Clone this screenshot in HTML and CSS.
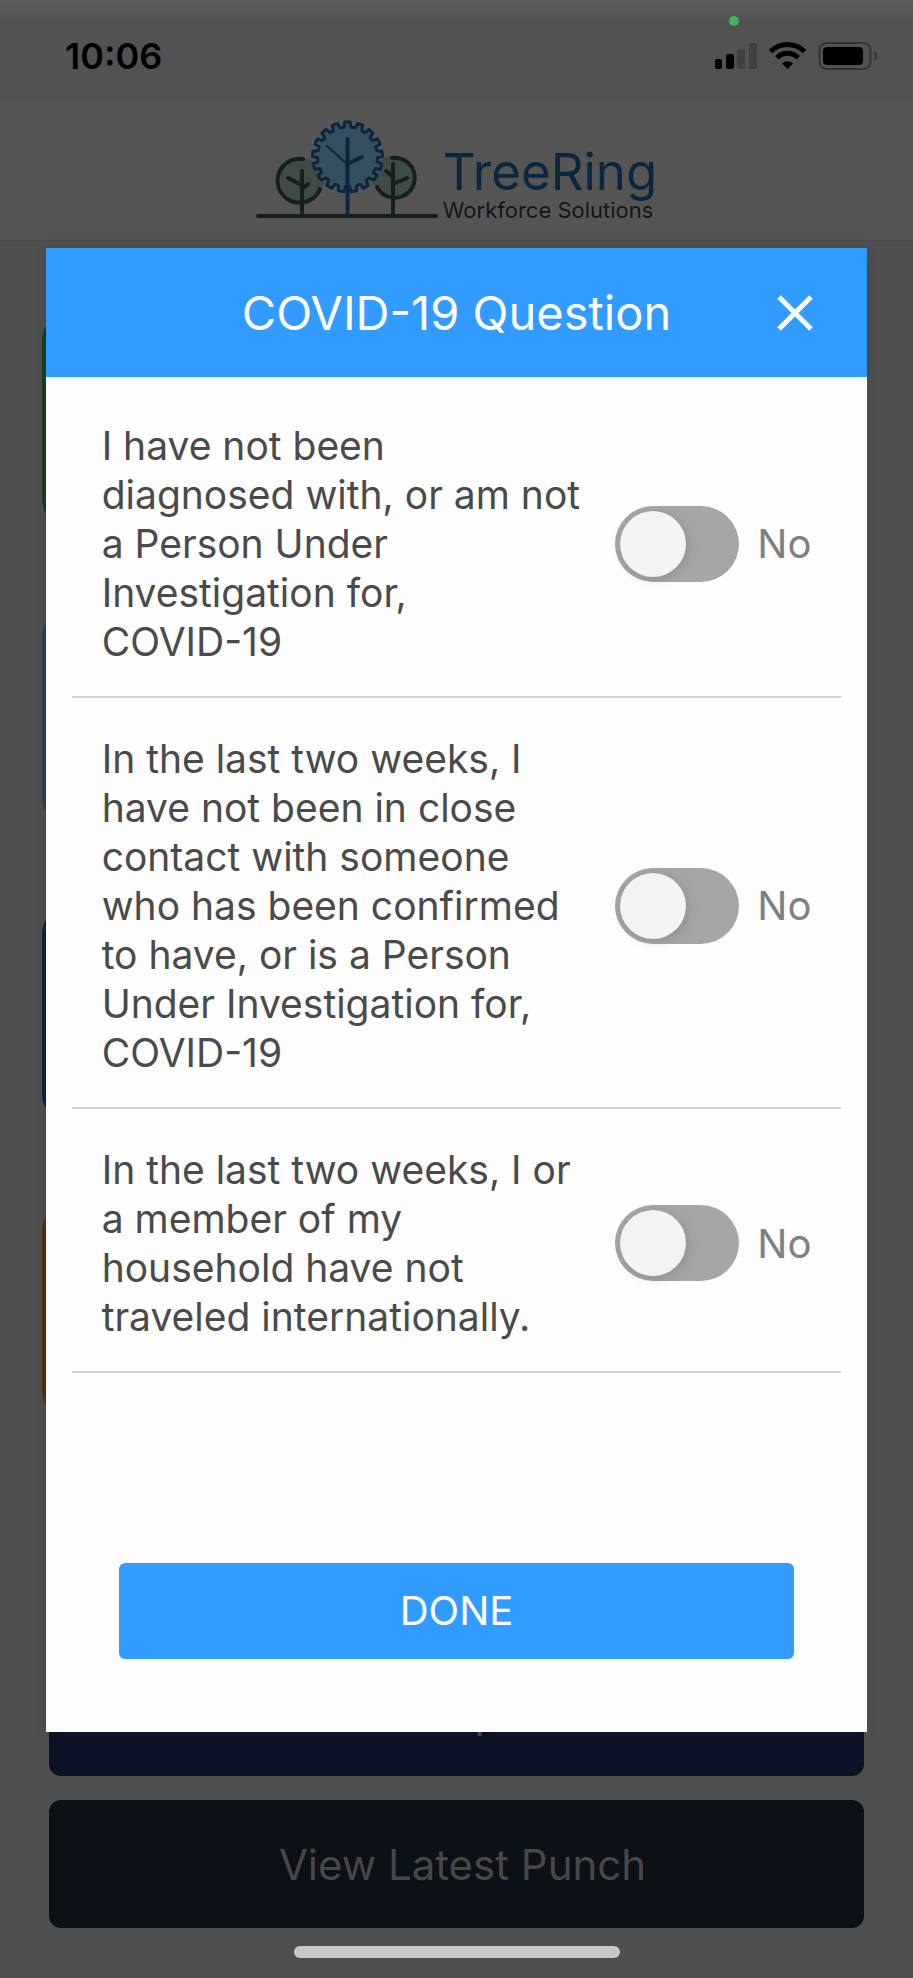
FILE: index.html
```html
<!DOCTYPE html>
<html lang="en">
<head>
  <meta charset="UTF-8">
  <meta name="viewport" content="width=device-width, initial-scale=1.0">
  <title>TreeRing Workforce Solutions</title>
  <link rel="stylesheet" href="styles.css">
</head>
<body>

<!-- Home screen, dimmed behind the dialog -->
<div class="home">
  <div class="status-bar">
    <span class="time">10:06</span>
    <span class="recording-dot"></span>
    <svg class="status-icons" width="164" height="30" viewBox="0 0 164 30">
      <rect x="0" y="18" width="7" height="10" rx="2"/>
      <rect x="11" y="13" width="8" height="15" rx="2"/>
      <rect x="22" y="8" width="8" height="20" rx="2" fill="#404040"/>
      <rect x="34" y="2" width="8" height="26" rx="2" fill="#404040"/>
      <g fill="none" stroke="#000" stroke-width="5">
        <path d="M55.500 10.500 A24 24 0 0 1 89.500 10.500"/>
        <path d="M61.800 16.800 A15 15 0 0 1 83.200 16.800"/>
      </g>
      <path d="M72.500 28 L67 22.500 A8 8 0 0 1 78 22.500 Z"/>
      <rect x="104.500" y="2" width="51" height="26" rx="7" fill="none" stroke="#343434" stroke-width="2"/>
      <rect x="108" y="6" width="40" height="18" rx="4"/>
      <path d="M159.500 10 A6 6 0 0 1 159.500 20 Z" fill="#343434"/>
    </svg>
  </div>

  <header class="brand">
    <svg class="logo" width="184" height="100" viewBox="0 0 184 100">
      <g stroke-linecap="round" stroke-linejoin="round" fill="none">
        <circle cx="46" cy="60" r="22" fill="#414b46"/>
        <circle cx="137" cy="57" r="21" fill="#414b46"/>
        <g stroke="#141f1f" stroke-width="4">
          <path d="M47 39 A22 22 0 1 0 64 69"/>
          <path d="M136 38 A20 20 0 1 1 121 67"/>
          <path d="M46 51 V94 M32 58 L46 65 M46 69 L52 64"/>
          <path d="M137 44 V94 M130 51 L137 57 M137 64 L151 58"/>
          <path d="M2 96 H180"/>
        </g>
        <path id="gear" fill="#374f5c" stroke="#0b2740" stroke-width="3"/>
        <path d="M91.500 19 V94" stroke="#0b2740" stroke-width="4"/>
        <path d="M71 26 L91 44" stroke="#0b2740" stroke-width="2"/>
        <path d="M91 44 L106 37" stroke="#0b2740" stroke-width="4"/>
      </g>
    </svg>
    <div class="brand-text">
      <span class="brand-name">TreeRing</span>
      <span class="brand-tagline">Workforce Solutions</span>
    </div>
  </header>

  <main class="menu">
    <div class="tiles">
      <div class="tile green"></div>
      <div class="tile blue"></div>
      <div class="tile navy"></div>
      <div class="tile orange"></div>
    </div>
    <div class="menu-buttons">
      <button type="button" class="menu-button reports">See Reports</button>
      <button type="button" class="menu-button latest">View Latest Punch</button>
    </div>
    <div class="home-indicator"></div>
  </main>
</div>

<!-- COVID-19 dialog -->
<div class="overlay">
  <form class="modal" role="dialog" aria-labelledby="modal-title">
    <div class="modal-header">
      <h1 id="modal-title">COVID-19 Question</h1>
      <button type="button" class="close" aria-label="Close">
        <svg width="36" height="36" viewBox="0 0 36 36"><path d="M2 2 L34 34 M34 2 L2 34"/></svg>
      </button>
    </div>

    <div class="questions">
      <div class="question">
        <label for="q1">I have not been<br> diagnosed with, or am not a Person Under<br> Investigation for, <span class="nowrap">COVID-19</span></label>
        <input type="checkbox" class="switch" id="q1">
        <span class="answer">No</span>
      </div>
      <div class="question">
        <label for="q2">In the last two weeks, I have not been in close contact with someone who has been confirmed to have, or is a Person Under Investigation for, <span class="nowrap">COVID-19</span></label>
        <input type="checkbox" class="switch" id="q2">
        <span class="answer">No</span>
      </div>
      <div class="question">
        <label for="q3">In the last two weeks, I or a member of my household have not traveled internationally.</label>
        <input type="checkbox" class="switch" id="q3">
        <span class="answer">No</span>
      </div>
    </div>

    <button type="button" class="done">DONE</button>
  </form>
</div>

<script>
  // Gear outline of the middle tree, left open at the trunk
  const teeth = 17;
  const cx = 91.5, cy = 37;
  const step = 2 * Math.PI / teeth;
  const points = [];

  function addPoint(radius, angle) {
    points.push((cx + Math.sin(angle) * radius).toFixed(1) + ' ' + (cy - Math.cos(angle) * radius).toFixed(1));
  }

  for (let i = -8; i <= 8; i++) {
    const a = i * step;
    addPoint(30, a - step * 0.32);
    addPoint(35, a - step * 0.22);
    addPoint(35, a + step * 0.22);
    addPoint(30, a + step * 0.32);
  }
  document.getElementById('gear').setAttribute('d', 'M' + points.join(' L'));

  // Yes / No text beside each switch
  document.querySelectorAll('.switch').forEach(function (box) {
    box.addEventListener('change', function () {
      box.nextElementSibling.textContent = box.checked ? 'Yes' : 'No';
    });
  });
</script>

</body>
</html>
```
FILE: styles.css
```css
* {
  box-sizing: border-box;
}

body {
  margin: 0;
  font-family: Inter, "Liberation Sans", sans-serif;
  background: #4f4f4f;
}

button {
  font-family: inherit;
  border: none;
  cursor: pointer;
}

/* Home screen */
.home {
  display: flex;
  flex-direction: column;
  min-height: 100vh;
}

.status-bar {
  position: relative;
  display: flex;
  align-items: center;
  justify-content: space-between;
  height: 97px;
  padding: 14px 34px 0 65px;
  background: linear-gradient(#5b5b5b, #525252 24px);
}

.time {
  font-size: 36px;
  font-weight: 600;
  color: #000;
}

.recording-dot {
  position: absolute;
  top: 16px;
  right: 174px;
  width: 10px;
  height: 10px;
  border-radius: 50%;
  background: #3bb45c;
}

.brand {
  display: flex;
  align-items: flex-end;
  justify-content: center;
  gap: 3px;
  height: 144px;
  padding-bottom: 20px;
  background: #555;
  border-bottom: 1px solid #4b4b4b;
}

.brand-text {
  display: flex;
  flex-direction: column;
}

.brand-name {
  font-size: 51px;
  line-height: 56px;
  color: #0b2740;
}

.brand-tagline {
  font-size: 22px;
  line-height: 20px;
  color: #151515;
}

.menu {
  display: flex;
  flex-direction: column;
  flex: 1;
  padding: 71px 42px 20px;
}

.tiles {
  display: flex;
  flex-direction: column;
  gap: 81px;
}

.tile {
  width: 50%;
  height: 216px;
  border-radius: 28px;
}

.green { background: #17401f; }
.blue { background: #24405a; }
.navy { background: #0e2145; }
.orange { background: #542f0c; }

.menu-buttons {
  display: flex;
  flex-direction: column;
  gap: 24px;
  margin-top: auto;
  padding: 0 7px;
}

.menu-button {
  height: 128px;
  border-radius: 12px;
  background: #0c1017;
  color: #484848;
  font-size: 42px;
}

.reports {
  background: #0d1326;
}

.latest {
  padding-left: 18px;
}

.home-indicator {
  align-self: center;
  width: 326px;
  height: 12px;
  margin-top: 18px;
  border-radius: 6px;
  background: #c8c8c8;
}

/* Dialog */
.overlay {
  position: absolute;
  top: 248px;
  left: 0;
  right: 0;
  display: flex;
  justify-content: center;
}

.modal {
  display: flex;
  flex-direction: column;
  width: 90%;
  min-height: 75vh;
  padding-bottom: 73px;
  background: #fdfdfd;
  box-shadow: 0 0 12px rgba(0, 0, 0, 0.1);
}

.modal-header {
  display: grid;
  grid-template-columns: 72px 1fr 72px;
  align-items: center;
  height: 129px;
  padding: 0 36px;
  background: #319bff;
  color: #fff;
}

.modal-header h1 {
  grid-column: 2;
  margin: 0;
  font-size: 47px;
  font-weight: 400;
  text-align: center;
}

.close {
  display: flex;
  justify-content: center;
  padding: 0;
  background: none;
}

.close path {
  stroke: #fff;
  stroke-width: 5;
}

.questions {
  padding: 8px 26px 0;
}

.question {
  display: flex;
  align-items: center;
  padding: 36px 30px 30px;
  border-bottom: 2px solid #d0d0d0;
}

.question label {
  flex: 1;
  padding-right: 20px;
  font-size: 39px;
  line-height: 49px;
  color: #4a4a4a;
}

.nowrap {
  white-space: nowrap;
}

.switch {
  appearance: none;
  flex: none;
  width: 124px;
  height: 76px;
  margin: 0;
  padding: 5px;
  border-radius: 38px;
  background: #a6a6a6;
  cursor: pointer;
}

.switch::before {
  content: "";
  display: block;
  width: 66px;
  height: 66px;
  border-radius: 50%;
  background: #f3f3f3;
  box-shadow: 2px 2px 12px rgba(0, 0, 0, 0.15);
}

.switch:checked {
  background: #319bff;
}

.switch:checked::before {
  margin-left: auto;
}

.answer {
  width: 72px;
  padding-left: 18px;
  font-size: 40px;
  color: #808080;
}

.done {
  height: 96px;
  margin: auto 73px 0;
  border-radius: 6px;
  background: #319bff;
  color: #fff;
  font-size: 40px;
}
```
